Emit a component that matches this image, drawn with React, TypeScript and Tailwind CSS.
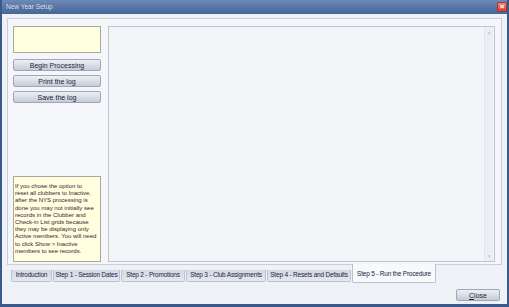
import React from 'react';

const TABS = [
  { label: 'Introduction', w: 'w-[41px]' },
  { label: 'Step 1 - Session Dates', w: 'w-[67px]' },
  { label: 'Step 2 - Promotions', w: 'w-[64px]' },
  { label: 'Step 3 - Club Assignments', w: 'w-[80px]' },
  { label: 'Step 4 - Resets and Defaults', w: 'w-[84px]' },
];

const NOTE = [
  'If you chose the option to',
  'reset all clubbers to Inactive,',
  'after the NYS processing is',
  'done you may not initially see',
  'records in the Clubber and',
  'Check-in List grids because',
  'they may be displaying only',
  'Active members. You will need',
  'to click Show > Inactive',
  'members to see records.',
];

function ActionButton({ label }: { label: string }) {
  return (
    <button className="h-[12px] w-full rounded-[2px] border border-[#9ca8b8] bg-gradient-to-b from-[#eef1f5] to-[#c4ccd7] text-[7px] leading-none text-[#1f2340]">
      {label}
    </button>
  );
}

export default function App() {
  return (
    <div
      className="flex h-[307px] w-[509px] flex-col bg-[#3a5a8b] px-[2px] pb-[3px] text-[#1f2340]"
      style={{ fontFamily: '"Liberation Sans", Arial, sans-serif' }}
    >
      {/* title bar */}
      <div className="flex h-[14px] items-center justify-between bg-gradient-to-b from-[#6c8ab7] to-[#46679a] pl-[4px] pr-[0px]">
        <span className="text-[6.5px] text-[#eef3fa] [text-shadow:0_0_1px_#1c3560]">New Year Setup</span>
        <div className="flex h-[10px] w-[10px] items-center justify-center rounded-[1px] border border-[#a33] bg-gradient-to-b from-[#f08a7a] to-[#d43c2c] text-[8px] font-bold leading-none text-white">
          ×
        </div>
      </div>

      {/* client area */}
      <div className="flex flex-1 flex-col bg-[#eef1f5] pt-[4px]">
        {/* tab panel */}
        <div className="mx-[5px] flex h-[247px] gap-[7px] border border-[#c7cfd9] bg-[#f4f6f9] pb-[2px] pl-[5px] pr-[6px] pt-[7px]">
          <div className="flex w-[88px] flex-col">
            <div className="h-[27px] border border-[#a9a9a0] bg-[#ffffdf]" />
            <div className="mt-[6px] flex flex-col gap-[4px]">
              <ActionButton label="Begin Processing" />
              <ActionButton label="Print the log" />
              <ActionButton label="Save the log" />
            </div>
            <div className="mt-auto h-[86px] border border-[#a9a9a0] bg-[#ffffdf] px-[1px] pt-[6px] text-[6px] leading-[7.2px] text-[#3c1838]">
              {NOTE.map((line) => (
                <div key={line} className="whitespace-nowrap">{line}</div>
              ))}
            </div>
          </div>

          {/* log area */}
          <div className="flex flex-1 justify-end border border-[#bcc5d0] bg-[#f3f5f8] pr-[1px]">
            <div className="flex w-[9px] flex-col justify-between border-l border-[#e1e6ec] bg-[#ebeff3] py-[1px]">
              <div className="flex h-[8px] items-center justify-center text-[5px] leading-none text-[#c8ced6]">▲</div>
              <div className="flex h-[8px] items-center justify-center text-[5px] leading-none text-[#c8ced6]">▼</div>
            </div>
          </div>
        </div>

        {/* tabs */}
        <div className="ml-[9px] flex items-start gap-[1px]">
          {TABS.map((t) => (
            <div
              key={t.label}
              className={`${t.w} mt-[5px] flex h-[12px] items-center justify-center whitespace-nowrap rounded-b-[2px] border border-t-0 border-[#b9c2ce] bg-gradient-to-b from-[#d3dae3] to-[#e3e8ee] text-[6.5px] leading-none tracking-[-0.2px]`}
            >
              {t.label}
            </div>
          ))}
          <div className="-mt-[1px] flex h-[19px] w-[84px] items-center justify-center whitespace-nowrap rounded-b-[2px] border border-t-0 border-[#b9c2ce] bg-[#f7f9fb] pt-[2px] text-[6.5px] leading-none tracking-[-0.2px]">
            Step 5 - Run the Procedure
          </div>
        </div>

        {/* footer */}
        <div className="mt-auto mb-[3px] flex justify-end pr-[7px]">
          <button className="h-[12px] w-[44px] rounded-[2px] border border-[#9ca8b8] bg-gradient-to-b from-[#eef1f5] to-[#c4ccd7] text-[7px] leading-none text-[#1f2340]">
            <span className="underline">C</span>lose
          </button>
        </div>
      </div>
    </div>
  );
}
